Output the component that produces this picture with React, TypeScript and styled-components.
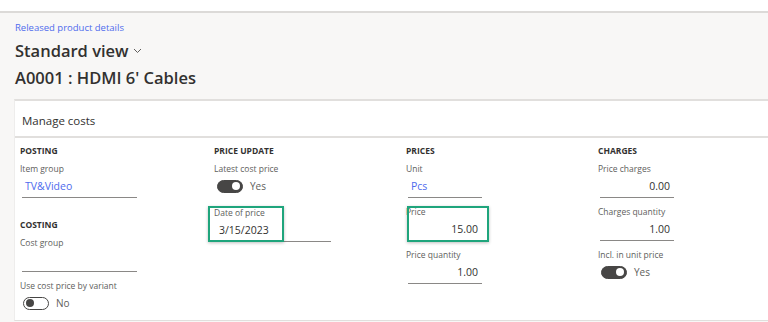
import React, { FC } from 'react';
import styled, { createGlobalStyle } from 'styled-components';

const PAGE_BG = '#f8f7f6';
const LINE = '#e1dfdd';
const TEXT_DARK = '#323130';
const TEXT_LABEL = '#605e5c';
const LINK_BLUE = '#4f6bed';
const FOCUS_GREEN = '#1fa57c';

const GlobalStyle = createGlobalStyle`
  html, body {
    margin: 0;
    padding: 0;
    background: ${PAGE_BG};
    font-family: 'Open Sans', 'Noto Sans', sans-serif;
    color: ${TEXT_DARK};
    overflow: hidden;
  }
`;

const Page = styled.div`
  width: 768px;
  height: 322px;
  display: flex;
  flex-direction: column;
  overflow: hidden;
`;

const TopStrip = styled.div`
  flex-shrink: 0;
  height: 11px;
  background: #ffffff;
  border-bottom: 2px solid #dcdad8;
`;

const Header = styled.header`
  flex-shrink: 0;
  padding: 8px 0 0 15px;
  height: 86px;
  box-sizing: border-box;
`;

const Breadcrumb = styled.a`
  display: block;
  font-size: 9.5px;
  line-height: 14px;
  color: ${LINK_BLUE};
  text-decoration: none;
`;

const ViewTitle = styled.div`
  display: flex;
  align-items: center;
  gap: 4px;
  margin-top: 4px;
  font-size: 16.5px;
  line-height: 24px;
  font-weight: 600;
`;

const RecordTitle = styled.h1`
  margin: 3px 0 0;
  font-size: 16.5px;
  line-height: 24px;
  font-weight: 600;
`;

const Card = styled.section`
  flex: 1;
  min-height: 0;
  overflow: hidden;
  margin-left: 14px;
  background: #ffffff;
  border-top: 2px solid ${LINE};
  border-left: 1px solid #eeedec;
  border-bottom: 1px solid ${LINE};
  margin-bottom: 1px;
`;

const CardHeader = styled.div`
  height: 37px;
  display: flex;
  align-items: center;
  padding: 4px 0 0 7px;
  font-size: 11.5px;
  border-bottom: 2px solid ${LINE};
  box-sizing: border-box;
`;

const Columns = styled.div`
  display: grid;
  grid-template-columns: 194px 192px 192px 192px;
  padding: 6px 0 0 5px;
`;

const Column = styled.div`
  display: flex;
  flex-direction: column;
`;

const SectionTitle = styled.div<{ $spaced?: boolean }>`
  font-size: 8.5px;
  line-height: 14px;
  font-weight: 700;
  text-transform: uppercase;
  color: ${TEXT_DARK};
  margin-top: ${p => (p.$spaced ? '13px' : '0')};
  margin-bottom: 4px;
`;

const FieldWrap = styled.div<{ $width: number }>`
  position: relative;
  width: ${p => p.$width}px;
  margin-bottom: 7px;
`;

const Label = styled.div`
  font-size: 8.5px;
  line-height: 14px;
  color: ${TEXT_LABEL};
  white-space: nowrap;
`;

const Value = styled.div<{ $align: 'left' | 'right'; $link?: boolean }>`
  height: 22px;
  margin-left: 2px;
  padding: 0 4px 0 3px;
  box-sizing: border-box;
  border-bottom: 1px solid #8a8886;
  font-size: 10.5px;
  line-height: 20px;
  text-align: ${p => p.$align};
  color: ${p => (p.$link ? LINK_BLUE : TEXT_DARK)};
`;

const FocusBox = styled.div<{ $left: number; $top: number; $w: number; $h: number }>`
  position: absolute;
  left: ${p => p.$left}px;
  top: ${p => p.$top}px;
  width: ${p => p.$w}px;
  height: ${p => p.$h}px;
  box-sizing: border-box;
  border: 2px solid ${FOCUS_GREEN};
  box-shadow: 0 1px 3px rgba(0, 0, 0, 0.25);
  pointer-events: none;
`;

const ToggleRow = styled.div`
  display: flex;
  align-items: center;
  gap: 7px;
  height: 20px;
  padding-left: 3px;
  font-size: 10px;
  color: ${TEXT_LABEL};
  margin-bottom: 10px;
`;

const Track = styled.span<{ $on: boolean }>`
  position: relative;
  width: 26px;
  height: 13px;
  box-sizing: border-box;
  border-radius: 7px;
  background: ${p => (p.$on ? '#474645' : '#ffffff')};
  border: 1px solid #474645;
`;

const Knob = styled.span<{ $on: boolean }>`
  position: absolute;
  top: 1.5px;
  left: ${p => (p.$on ? '14px' : '2px')};
  width: 8px;
  height: 8px;
  border-radius: 50%;
  background: ${p => (p.$on ? '#ffffff' : '#474645')};
`;

interface FieldProps {
  label: string;
  value?: string;
  width: number;
  align?: 'left' | 'right';
  link?: boolean;
  focus?: { left: number; top: number; w: number; h: number };
}

const Field: FC<FieldProps> = ({ label, value, width, align = 'left', link, focus }) => (
  <FieldWrap $width={width}>
    <Label>{label}</Label>
    <Value $align={align} $link={link}>{value}</Value>
    {focus && <FocusBox $left={focus.left} $top={focus.top} $w={focus.w} $h={focus.h} />}
  </FieldWrap>
);

const Toggle: FC<{ label: string; on: boolean }> = ({ label, on }) => (
  <>
    <Label>{label}</Label>
    <ToggleRow>
      <Track $on={on}>
        <Knob $on={on} />
      </Track>
      {on ? 'Yes' : 'No'}
    </ToggleRow>
  </>
);

const Chevron = () => (
  <svg width="9" height="6" viewBox="0 0 9 6" fill="none">
    <path d="M1 1l3.5 3.5L8 1" stroke="#605e5c" strokeWidth="1" />
  </svg>
);

export default function App() {
  return (
    <Page>
      <GlobalStyle />
      <TopStrip />
      <Header>
        <Breadcrumb href="#">Released product details</Breadcrumb>
        <ViewTitle>
          Standard view <Chevron />
        </ViewTitle>
        <RecordTitle>A0001 : HDMI 6' Cables</RecordTitle>
      </Header>
      <Card>
        <CardHeader>Manage costs</CardHeader>
        <Columns>
          <Column>
            <SectionTitle>Posting</SectionTitle>
            <Field label="Item group" value="TV&Video" width={117} link />
            <SectionTitle $spaced>Costing</SectionTitle>
            <Field label="Cost group" width={117} />
            <Toggle label="Use cost price by variant" on={false} />
          </Column>
          <Column>
            <SectionTitle>Price update</SectionTitle>
            <Toggle label="Latest cost price" on />
            <Field
              label="Date of price"
              value="3/15/2023"
              width={117}
              focus={{ left: -6, top: 0, w: 76, h: 36 }}
            />
          </Column>
          <Column>
            <SectionTitle>Prices</SectionTitle>
            <Field label="Unit" value="Pcs" width={76} link />
            <Field
              label="Price"
              value="15.00"
              width={76}
              align="right"
              focus={{ left: 1, top: 1, w: 82, h: 36 }}
            />
            <Field label="Price quantity" value="1.00" width={76} align="right" />
          </Column>
          <Column>
            <SectionTitle>Charges</SectionTitle>
            <Field label="Price charges" value="0.00" width={76} align="right" />
            <Field label="Charges quantity" value="1.00" width={76} align="right" />
            <Toggle label="Incl. in unit price" on />
          </Column>
        </Columns>
      </Card>
    </Page>
  );
}
